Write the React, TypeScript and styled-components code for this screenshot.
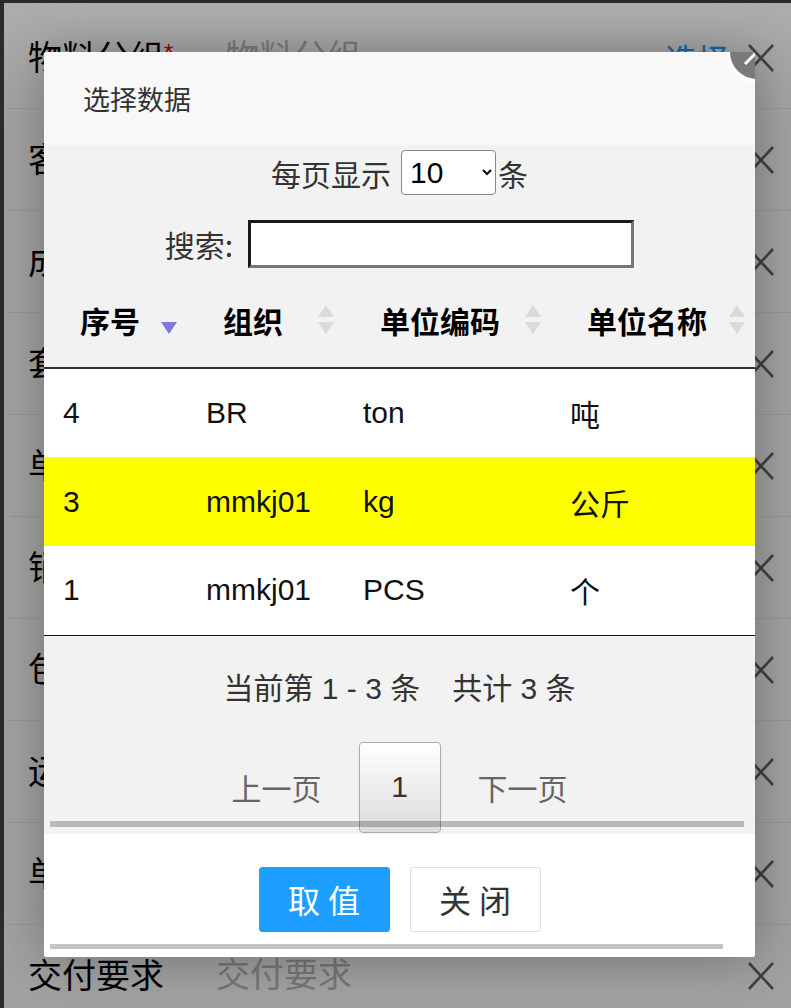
import React from 'react'
import styled, { createGlobalStyle } from 'styled-components'

const GlobalStyle = createGlobalStyle`
  html, body {
    margin: 0;
    padding: 0;
  }
  body {
    font-family: "Liberation Sans", "Noto Sans CJK SC", sans-serif;
    background: #fff;
  }
  * {
    box-sizing: border-box;
  }
`

// background form (dimmed by the overlay)

const Page = styled.div`
  position: relative;
  width: 791px;
  height: 1008px;
  overflow: hidden;
  border-top: 3px solid #2b2b2b;
  border-left: 4px solid #2b2b2b;
  padding-top: 4px;
  background: #fff;
`

const FormRow = styled.div`
  display: flex;
  align-items: center;
  height: 102px;
  padding: 0 16px 0 24px;
  border-bottom: 1px solid #eee;
`

const Label = styled.span`
  font-size: 34px;
  color: #000;
  white-space: nowrap;
  line-height: 1;
`

const Required = styled.span`
  color: #e00;
  font-size: 24px;
  vertical-align: top;
`

const FieldInput = styled.input`
  flex: 1;
  min-width: 0;
  margin-left: 50px;
  border: none;
  background: transparent;
  font-size: 34px;
  font-family: inherit;
  color: #333;
  &::placeholder {
    color: #bbb;
  }
`

const PickLink = styled.span`
  color: #1e9fff;
  font-size: 32px;
  margin-right: 18px;
`

const RowClose = styled.svg`
  width: 28px;
  height: 30px;
  flex-shrink: 0;
`

const Overlay = styled.div`
  position: absolute;
  inset: 0;
  background: linear-gradient(rgba(0, 0, 0, 0.32) 0px, rgba(0, 0, 0, 0.37) 120px);
  z-index: 1;
`

// dialog

const Dialog = styled.div`
  position: absolute;
  left: 40px;
  top: 49px;
  width: 711px;
  background: #fff;
  border-radius: 3px;
  box-shadow: 1px 1px 50px rgba(0, 0, 0, 0.3);
  overflow: hidden;
  z-index: 2;
`

const DialogHeader = styled.div`
  height: 93px;
  line-height: 93px;
  padding-left: 39px;
  font-size: 27px;
  color: #333;
  background: #f8f8f8;
  font-family: "Noto Sans CJK SC", sans-serif;
`

const DialogClose = styled.div`
  position: absolute;
  top: -30px;
  right: -32px;
  width: 60px;
  height: 60px;
  border-radius: 50%;
  background: #7a7a7a;
  border: 3px solid #fff;
  box-shadow: 0 0 6px rgba(255, 255, 255, 0.8);
  display: flex;
  align-items: center;
  justify-content: center;
`

const DialogBody = styled.div`
  background: #f2f2f2;
  padding: 5px 0 7px;
  color: #333;
`

const LengthRow = styled.div`
  height: 45px;
  display: flex;
  justify-content: center;
  align-items: center;
  font-size: 30px;
  font-family: "Noto Sans CJK SC", sans-serif;
`

const LengthSelect = styled.select`
  width: 95px;
  height: 45px;
  margin: 0 2px 0 10px;
  padding: 0 4px;
  font-size: 30px;
  font-family: "Liberation Sans", sans-serif;
  color: #000;
  background: #fff;
  border: 1px solid #888;
  border-radius: 4px;
`

const SearchRow = styled.div`
  margin-top: 25px;
  height: 48px;
  display: flex;
  justify-content: center;
  align-items: center;
  gap: 15px;
  font-size: 30px;
  font-family: "Noto Sans CJK SC", sans-serif;
`

const SearchInput = styled.input`
  width: 386px;
  height: 48px;
  background: #fff;
  border-style: solid;
  border-width: 3px;
  border-color: #1a1a1a #767676 #767676 #1a1a1a;
  font-size: 26px;
`

const Table = styled.table`
  margin-top: 8px;
  width: 711px;
  border-collapse: collapse;
  table-layout: fixed;
`

const Th = styled.th`
  padding: 24px 10px 27px 36px;
  line-height: 40px;
  font-size: 30px;
  font-weight: bold;
  text-align: left;
  color: #000;
  border-bottom: 2px solid #333;
  font-family: "Noto Sans CJK SC", sans-serif;
`

const HeadInner = styled.div`
  display: flex;
  align-items: center;
  justify-content: space-between;
`

const Tr = styled.tr<{ $active?: boolean }>`
  background: ${({ $active }) => ($active ? '#ffff00' : '#fff')};
  &:last-child td {
    border-bottom: 1px solid #111;
  }
`

const Td = styled.td`
  height: 89px;
  padding: 0 10px 0 19px;
  font-size: 30px;
  color: #111;
  vertical-align: middle;
  white-space: nowrap;
`

const Info = styled.div`
  margin-top: 33px;
  line-height: 40px;
  display: flex;
  justify-content: center;
  gap: 32px;
  font-size: 30px;
  color: #333;
`

const Pager = styled.div`
  margin-top: 33px;
  height: 91px;
  display: flex;
  justify-content: center;
  align-items: center;
  gap: 37px;
`

const PageLink = styled.span`
  font-size: 30px;
  color: #666;
  font-family: "Noto Sans CJK SC", sans-serif;
`

const PageButton = styled.div`
  width: 82px;
  height: 91px;
  border: 1px solid #aaa;
  border-radius: 4px;
  background: linear-gradient(#fff 0%, #dcdcdc 100%);
  display: flex;
  align-items: center;
  justify-content: center;
  font-size: 30px;
  color: #333;
`

const ScrollBar = styled.div<{ $top: number; $right: number; $h: number }>`
  position: relative;
  margin: ${({ $top, $right }) => `${$top}px ${$right}px 0 6px`};
  height: ${({ $h }) => $h}px;
  background: rgba(0, 0, 0, 0.23);
`

const DialogFooter = styled.div`
  background: #fff;
  padding: 33px 0 8px;
`

const Actions = styled.div`
  display: flex;
  justify-content: center;
  gap: 20px;
`

const ActionButton = styled.div<{ $primary?: boolean }>`
  width: 131px;
  height: 65px;
  border-radius: 3px;
  display: flex;
  align-items: center;
  justify-content: center;
  font-size: 32px;
  letter-spacing: 8px;
  text-indent: 8px;
  font-family: "Noto Sans CJK SC", sans-serif;
  background: ${({ $primary }) => ($primary ? '#1e9fff' : '#fff')};
  color: ${({ $primary }) => ($primary ? '#fff' : '#333')};
  border: 1px solid ${({ $primary }) => ($primary ? '#1e9fff' : '#dedede')};
`

const CrossIcon = () => (
  <RowClose viewBox="0 0 28 30">
    <path d="M2 2 L26 28 M26 2 L2 28" stroke="#666" strokeWidth="2.6" fill="none" />
  </RowClose>
)

const SortIcon = ({ active }: { active?: boolean }) => (
  <svg width="16" height="30" viewBox="0 0 16 30">
    {!active && <polygon points="8,0 0,12 16,12" fill="#dadada" />}
    <polygon points="0,17 16,17 8,29" fill={active ? '#7b7bdc' : '#dadada'} />
  </svg>
)

const formRows = ['物料分组', '客户编码', '成品类型', '套装数量', '单位', '销售价格', '包装方式', '运输方式', '单价', '交付要求']

const columns = [
  { title: '序号', width: 143, active: true },
  { title: '组织', width: 157 },
  { title: '单位编码', width: 207 },
  { title: '单位名称', width: 204 }
]

const rows = [
  ['4', 'BR', 'ton', '吨'],
  ['3', 'mmkj01', 'kg', '公斤'],
  ['1', 'mmkj01', 'PCS', '个']
]

export default function App() {
  return (
    <Page>
      <GlobalStyle />
      {formRows.map((label, i) => (
        <FormRow key={label}>
          <Label>
            {label}
            {i === 0 && <Required>*</Required>}
          </Label>
          <FieldInput placeholder={label} readOnly />
          {i === 0 && <PickLink>选择</PickLink>}
          <CrossIcon />
        </FormRow>
      ))}
      <Overlay />
      <Dialog>
        <DialogHeader>选择数据</DialogHeader>
        <DialogClose>
          <svg width="34" height="34" viewBox="0 0 34 34">
            <path d="M5 5 L29 29 M29 5 L5 29" stroke="#fff" strokeWidth="3" fill="none" />
          </svg>
        </DialogClose>
        <DialogBody>
          <LengthRow>
            每页显示
            <LengthSelect defaultValue="10">
              <option value="10">10</option>
              <option value="25">25</option>
              <option value="50">50</option>
            </LengthSelect>
            条
          </LengthRow>
          <SearchRow>
            搜索:
            <SearchInput />
          </SearchRow>
          <Table>
            <colgroup>
              {columns.map(c => (
                <col key={c.title} style={{ width: c.width }} />
              ))}
            </colgroup>
            <thead>
              <tr>
                {columns.map(c => (
                  <Th key={c.title}>
                    <HeadInner>
                      {c.title}
                      <SortIcon active={c.active} />
                    </HeadInner>
                  </Th>
                ))}
              </tr>
            </thead>
            <tbody>
              {rows.map((r, i) => (
                <Tr key={r[0]} $active={i === 1}>
                  {r.map((cell, j) => (
                    <Td key={j}>{cell}</Td>
                  ))}
                </Tr>
              ))}
            </tbody>
          </Table>
          <Info>
            <span>当前第 1 - 3 条</span>
            <span>共计 3 条</span>
          </Info>
          <Pager>
            <PageLink>上一页</PageLink>
            <PageButton>1</PageButton>
            <PageLink>下一页</PageLink>
          </Pager>
          <ScrollBar $top={-12} $right={11} $h={6} />
        </DialogBody>
        <DialogFooter>
          <Actions>
            <ActionButton $primary>取值</ActionButton>
            <ActionButton>关闭</ActionButton>
          </Actions>
          <ScrollBar $top={12} $right={32} $h={5} />
        </DialogFooter>
      </Dialog>
    </Page>
  )
}
